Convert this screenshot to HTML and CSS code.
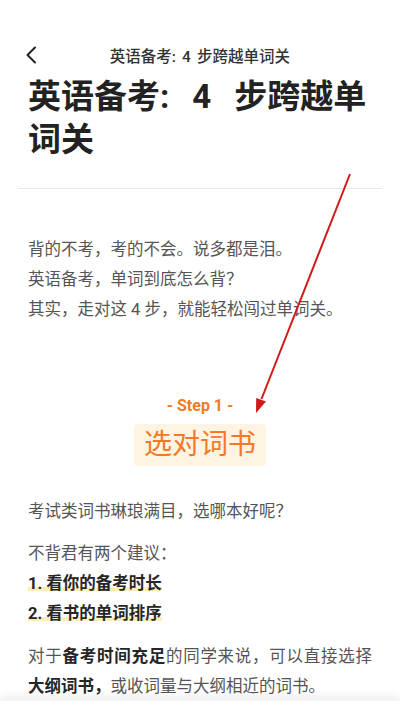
FILE: index.html
```html
<!DOCTYPE html>
<html lang="zh-CN">
<head>
<meta charset="utf-8">
<meta name="viewport" content="width=device-width, initial-scale=1">
<title>英语备考: 4 步跨越单词关</title>
<link rel="stylesheet" href="styles.css">
</head>
<body>
<div class="page">
  <header class="topbar">
    <div class="back">
      <svg width="12" height="18" viewBox="0 0 12 18"><path d="M10 1.5 L2.5 9 L10 16.5" fill="none" stroke="#222" stroke-width="2" stroke-linecap="round" stroke-linejoin="round"/></svg>
    </div>
    <div class="bar-title">英语备考: 4 步跨越单词关</div>
    <div></div>
  </header>

  <h1 class="title">英语备考: 4 步跨越单词关</h1>
  <hr class="divider">

  <article class="content">
    <p class="intro">背的不考，考的不会。说多都是泪。<br>英语备考，单词到底怎么背？<br>其实，走对这 4 步，就能轻松闯过单词关。</p>

    <section class="step">
      <div class="step-label">- Step 1 -</div>
      <div class="step-title">选对词书</div>
    </section>

    <p class="first">考试类词书琳琅满目，选哪本好呢？</p>
    <p>不背君有两个建议：<br><strong class="mark">1. 看你的备考时长</strong><br><strong class="mark">2. 看书的单词排序</strong></p>
    <p>对于<strong>备考时间充足</strong>的同学来说，可以直接选择<strong>大纲词书，</strong>或收词量与大纲相近的词书。</p>
    <p>后者，一般会额外收录一些考试的非大纲词，比如一些常考的高频词汇。</p>
  </article>

  <svg class="arrow" width="400" height="711" viewBox="0 0 400 711">
    <line x1="350" y1="174" x2="261.5" y2="399" stroke="#d01a1a" stroke-width="2"/>
    <polygon points="256,413 266,401.5 256.2,398" fill="#d01a1a"/>
  </svg>
  <div class="bottom-fade"></div>
</div>
</body>
</html>
```

FILE: styles.css
```css
html, body {
  margin: 0;
  padding: 0;
  background: #fff;
}

body {
  font-family: Roboto, "Noto Sans CJK SC", sans-serif;
  color: #555;
  overflow: hidden;
}

.page {
  position: relative;
  width: 400px;
  height: 711px;
  overflow: hidden;
}

.topbar {
  display: grid;
  grid-template-columns: 1fr auto 1fr;
  align-items: center;
  height: 40px;
  margin-top: 35px;
}

.back {
  padding-left: 25px;
  display: flex;
  align-items: center;
}

.bar-title {
  font-size: 15.5px;
  font-weight: 500;
  color: #333;
  white-space: nowrap;
  word-spacing: 0.15em;
}

.title {
  margin: 0;
  padding: 0 28px;
  font-size: 33px;
  line-height: 43px;
  font-weight: 700;
  color: #222;
  word-spacing: 0.45em;
}

.divider {
  margin: 27px 18px 0;
  border: 0;
  border-top: 1px solid #e9e9e9;
  height: 0;
}

.content {
  padding: 0 28px;
  font-size: 16.5px;
  line-height: 30px;
  text-align: justify;
}

.content p {
  margin: 0 0 13px;
}

.content .intro {
  margin-top: 46px;
}

.content strong {
  color: #262626;
  font-weight: 700;
}

.mark {
  background: linear-gradient(to bottom, transparent 66%, #fcefb6 66%, #fcefb6 90%, transparent 90%);
}

.step {
  display: flex;
  flex-direction: column;
  align-items: center;
  margin-top: 70px;
}

.step-label {
  font-size: 16px;
  line-height: 22px;
  font-weight: 700;
  color: #f07a27;
}

.step-title {
  margin-top: 7px;
  padding: 5px 10px;
  font-size: 28px;
  line-height: 32px;
  color: #f07a27;
  background: #fff3e2;
  border-radius: 4px;
}

.content .first {
  margin-top: 31px;
  margin-bottom: 12px;
}

.arrow {
  position: absolute;
  left: 0;
  top: 0;
  pointer-events: none;
}

.bottom-fade {
  position: absolute;
  left: 0;
  right: 0;
  bottom: 0;
  height: 10px;
  background: rgba(255, 255, 255, 0.6);
  box-shadow: 0 -5px 10px rgba(0, 0, 0, 0.07);
}
```
